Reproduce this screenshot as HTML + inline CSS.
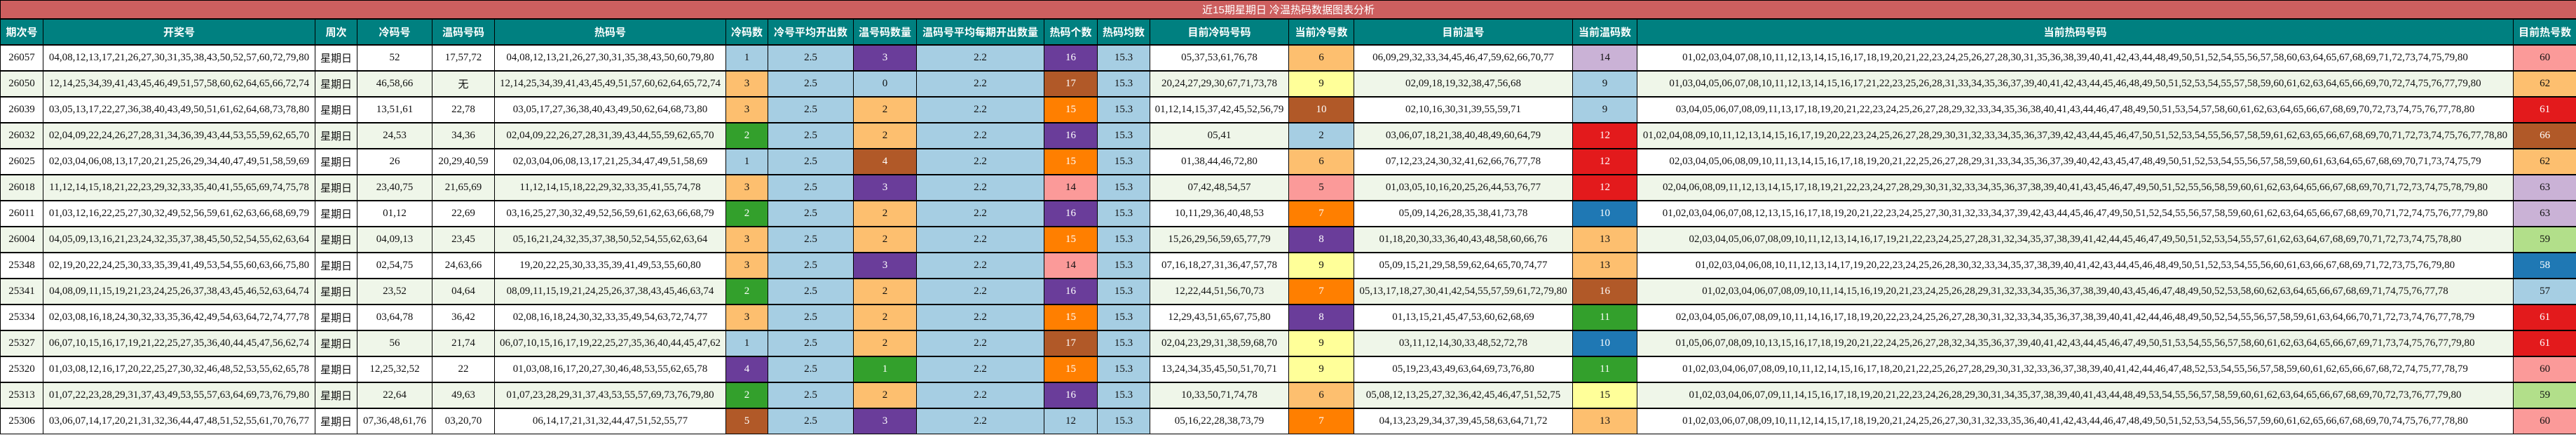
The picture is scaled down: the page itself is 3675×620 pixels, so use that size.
<!DOCTYPE html>
<html><head><meta charset="utf-8"><style>
html,body{margin:0;padding:0;background:#fff}
table{border-collapse:collapse;table-layout:fixed;width:3675px;font-family:"Liberation Serif","Noto Serif CJK SC",serif;font-size:15px;color:#111}
td,th{border:1px solid #000;text-align:center;padding:0;white-space:nowrap;overflow:hidden}
.t td{background:#CD5F5F;color:#fff;height:25px;font-family:"Liberation Sans","Noto Sans CJK SC",sans-serif;font-size:15px;border-bottom:2px solid #000}
th{background:#008080;color:#fff;height:35px;font-family:"Liberation Sans","Noto Sans CJK SC",sans-serif;font-size:15px;font-weight:bold}
tr.d td{height:35px;border-top:2px solid #000}
tr.a td{background:#EFF6E9}
td.lb{background:#A6CEE3!important}
td.lo{background:#FDBF6F!important}
td.p{background:#6A3D9A!important;color:#fff}
td.br{background:#B15928!important;color:#fff}
td.o{background:#FF7F00!important;color:#fff}
td.g{background:#33A02C!important;color:#fff}
td.pk{background:#FB9A99!important}
td.y{background:#FFFF99!important}
td.lv{background:#CAB2D6!important}
td.b{background:#1F78B4!important;color:#fff}
td.r{background:#E31A1C!important;color:#fff}
td.lg{background:#B2DF8A!important}
td.cn{font-family:"Liberation Sans","Noto Sans CJK SC",sans-serif}
</style></head><body>
<table>
<colgroup><col style="width:61px"><col style="width:388px"><col style="width:60px"><col style="width:107px"><col style="width:89px"><col style="width:330px"><col style="width:60px"><col style="width:122px"><col style="width:90px"><col style="width:182px"><col style="width:76px"><col style="width:75px"><col style="width:198px"><col style="width:93px"><col style="width:312px"><col style="width:92px"><col style="width:1250px"><col style="width:90px"></colgroup>
<tr class="t"><td colspan="18">近15期星期日 冷温热码数据图表分析</td></tr>
<tr><th>期次号</th><th>开奖号</th><th>周次</th><th>冷码号</th><th>温码号码</th><th>热码号</th><th>冷码数</th><th>冷号平均开出数</th><th>温号码数量</th><th>温码号平均每期开出数量</th><th>热码个数</th><th>热码均数</th><th>目前冷码号码</th><th>当前冷号数</th><th>目前温号</th><th>当前温码数</th><th>当前热码号码</th><th>目前热号数</th></tr>

<tr class="d"><td>26057</td><td>04,08,12,13,17,21,26,27,30,31,35,38,43,50,52,57,60,72,79,80</td><td class="cn">星期日</td><td>52</td><td>17,57,72</td><td>04,08,12,13,21,26,27,30,31,35,38,43,50,60,79,80</td><td class="lb">1</td><td class="lb">2.5</td><td class="p">3</td><td class="lb">2.2</td><td class="p">16</td><td class="lb">15.3</td><td>05,37,53,61,76,78</td><td class="lo">6</td><td>06,09,29,32,33,34,45,46,47,59,62,66,70,77</td><td class="lv">14</td><td>01,02,03,04,07,08,10,11,12,13,14,15,16,17,18,19,20,21,22,23,24,25,26,27,28,30,31,35,36,38,39,40,41,42,43,44,48,49,50,51,52,54,55,56,57,58,60,63,64,65,67,68,69,71,72,73,74,75,79,80</td><td class="pk">60</td></tr>

<tr class="d a"><td>26050</td><td>12,14,25,34,39,41,43,45,46,49,51,57,58,60,62,64,65,66,72,74</td><td class="cn">星期日</td><td>46,58,66</td><td class="cn">无</td><td>12,14,25,34,39,41,43,45,49,51,57,60,62,64,65,72,74</td><td class="lo">3</td><td class="lb">2.5</td><td class="lb">0</td><td class="lb">2.2</td><td class="br">17</td><td class="lb">15.3</td><td>20,24,27,29,30,67,71,73,78</td><td class="y">9</td><td>02,09,18,19,32,38,47,56,68</td><td class="lb">9</td><td>01,03,04,05,06,07,08,10,11,12,13,14,15,16,17,21,22,23,25,26,28,31,33,34,35,36,37,39,40,41,42,43,44,45,46,48,49,50,51,52,53,54,55,57,58,59,60,61,62,63,64,65,66,69,70,72,74,75,76,77,79,80</td><td class="lo">62</td></tr>

<tr class="d"><td>26039</td><td>03,05,13,17,22,27,36,38,40,43,49,50,51,61,62,64,68,73,78,80</td><td class="cn">星期日</td><td>13,51,61</td><td>22,78</td><td>03,05,17,27,36,38,40,43,49,50,62,64,68,73,80</td><td class="lo">3</td><td class="lb">2.5</td><td class="lo">2</td><td class="lb">2.2</td><td class="o">15</td><td class="lb">15.3</td><td>01,12,14,15,37,42,45,52,56,79</td><td class="br">10</td><td>02,10,16,30,31,39,55,59,71</td><td class="lb">9</td><td>03,04,05,06,07,08,09,11,13,17,18,19,20,21,22,23,24,25,26,27,28,29,32,33,34,35,36,38,40,41,43,44,46,47,48,49,50,51,53,54,57,58,60,61,62,63,64,65,66,67,68,69,70,72,73,74,75,76,77,78,80</td><td class="r">61</td></tr>

<tr class="d a"><td>26032</td><td>02,04,09,22,24,26,27,28,31,34,36,39,43,44,53,55,59,62,65,70</td><td class="cn">星期日</td><td>24,53</td><td>34,36</td><td>02,04,09,22,26,27,28,31,39,43,44,55,59,62,65,70</td><td class="g">2</td><td class="lb">2.5</td><td class="lo">2</td><td class="lb">2.2</td><td class="p">16</td><td class="lb">15.3</td><td>05,41</td><td class="lb">2</td><td>03,06,07,18,21,38,40,48,49,60,64,79</td><td class="r">12</td><td>01,02,04,08,09,10,11,12,13,14,15,16,17,19,20,22,23,24,25,26,27,28,29,30,31,32,33,34,35,36,37,39,42,43,44,45,46,47,50,51,52,53,54,55,56,57,58,59,61,62,63,65,66,67,68,69,70,71,72,73,74,75,76,77,78,80</td><td class="br">66</td></tr>

<tr class="d"><td>26025</td><td>02,03,04,06,08,13,17,20,21,25,26,29,34,40,47,49,51,58,59,69</td><td class="cn">星期日</td><td>26</td><td>20,29,40,59</td><td>02,03,04,06,08,13,17,21,25,34,47,49,51,58,69</td><td class="lb">1</td><td class="lb">2.5</td><td class="br">4</td><td class="lb">2.2</td><td class="o">15</td><td class="lb">15.3</td><td>01,38,44,46,72,80</td><td class="lo">6</td><td>07,12,23,24,30,32,41,62,66,76,77,78</td><td class="r">12</td><td>02,03,04,05,06,08,09,10,11,13,14,15,16,17,18,19,20,21,22,25,26,27,28,29,31,33,34,35,36,37,39,40,42,43,45,47,48,49,50,51,52,53,54,55,56,57,58,59,60,61,63,64,65,67,68,69,70,71,73,74,75,79</td><td class="lo">62</td></tr>

<tr class="d a"><td>26018</td><td>11,12,14,15,18,21,22,23,29,32,33,35,40,41,55,65,69,74,75,78</td><td class="cn">星期日</td><td>23,40,75</td><td>21,65,69</td><td>11,12,14,15,18,22,29,32,33,35,41,55,74,78</td><td class="lo">3</td><td class="lb">2.5</td><td class="p">3</td><td class="lb">2.2</td><td class="pk">14</td><td class="lb">15.3</td><td>07,42,48,54,57</td><td class="pk">5</td><td>01,03,05,10,16,20,25,26,44,53,76,77</td><td class="r">12</td><td>02,04,06,08,09,11,12,13,14,15,17,18,19,21,22,23,24,27,28,29,30,31,32,33,34,35,36,37,38,39,40,41,43,45,46,47,49,50,51,52,55,56,58,59,60,61,62,63,64,65,66,67,68,69,70,71,72,73,74,75,78,79,80</td><td class="lv">63</td></tr>

<tr class="d"><td>26011</td><td>01,03,12,16,22,25,27,30,32,49,52,56,59,61,62,63,66,68,69,79</td><td class="cn">星期日</td><td>01,12</td><td>22,69</td><td>03,16,25,27,30,32,49,52,56,59,61,62,63,66,68,79</td><td class="g">2</td><td class="lb">2.5</td><td class="lo">2</td><td class="lb">2.2</td><td class="p">16</td><td class="lb">15.3</td><td>10,11,29,36,40,48,53</td><td class="o">7</td><td>05,09,14,26,28,35,38,41,73,78</td><td class="b">10</td><td>01,02,03,04,06,07,08,12,13,15,16,17,18,19,20,21,22,23,24,25,27,30,31,32,33,34,37,39,42,43,44,45,46,47,49,50,51,52,54,55,56,57,58,59,60,61,62,63,64,65,66,67,68,69,70,71,72,74,75,76,77,79,80</td><td class="lv">63</td></tr>

<tr class="d a"><td>26004</td><td>04,05,09,13,16,21,23,24,32,35,37,38,45,50,52,54,55,62,63,64</td><td class="cn">星期日</td><td>04,09,13</td><td>23,45</td><td>05,16,21,24,32,35,37,38,50,52,54,55,62,63,64</td><td class="lo">3</td><td class="lb">2.5</td><td class="lo">2</td><td class="lb">2.2</td><td class="o">15</td><td class="lb">15.3</td><td>15,26,29,56,59,65,77,79</td><td class="p">8</td><td>01,18,20,30,33,36,40,43,48,58,60,66,76</td><td class="lo">13</td><td>02,03,04,05,06,07,08,09,10,11,12,13,14,16,17,19,21,22,23,24,25,27,28,31,32,34,35,37,38,39,41,42,44,45,46,47,49,50,51,52,53,54,55,57,61,62,63,64,67,68,69,70,71,72,73,74,75,78,80</td><td class="lg">59</td></tr>

<tr class="d"><td>25348</td><td>02,19,20,22,24,25,30,33,35,39,41,49,53,54,55,60,63,66,75,80</td><td class="cn">星期日</td><td>02,54,75</td><td>24,63,66</td><td>19,20,22,25,30,33,35,39,41,49,53,55,60,80</td><td class="lo">3</td><td class="lb">2.5</td><td class="p">3</td><td class="lb">2.2</td><td class="pk">14</td><td class="lb">15.3</td><td>07,16,18,27,31,36,47,57,78</td><td class="y">9</td><td>05,09,15,21,29,58,59,62,64,65,70,74,77</td><td class="lo">13</td><td>01,02,03,04,06,08,10,11,12,13,14,17,19,20,22,23,24,25,26,28,30,32,33,34,35,37,38,39,40,41,42,43,44,45,46,48,49,50,51,52,53,54,55,56,60,61,63,66,67,68,69,71,72,73,75,76,79,80</td><td class="b">58</td></tr>

<tr class="d a"><td>25341</td><td>04,08,09,11,15,19,21,23,24,25,26,37,38,43,45,46,52,63,64,74</td><td class="cn">星期日</td><td>23,52</td><td>04,64</td><td>08,09,11,15,19,21,24,25,26,37,38,43,45,46,63,74</td><td class="g">2</td><td class="lb">2.5</td><td class="lo">2</td><td class="lb">2.2</td><td class="p">16</td><td class="lb">15.3</td><td>12,22,44,51,56,70,73</td><td class="o">7</td><td>05,13,17,18,27,30,41,42,54,55,57,59,61,72,79,80</td><td class="br">16</td><td>01,02,03,04,06,07,08,09,10,11,14,15,16,19,20,21,23,24,25,26,28,29,31,32,33,34,35,36,37,38,39,40,43,45,46,47,48,49,50,52,53,58,60,62,63,64,65,66,67,68,69,71,74,75,76,77,78</td><td class="lb">57</td></tr>

<tr class="d"><td>25334</td><td>02,03,08,16,18,24,30,32,33,35,36,42,49,54,63,64,72,74,77,78</td><td class="cn">星期日</td><td>03,64,78</td><td>36,42</td><td>02,08,16,18,24,30,32,33,35,49,54,63,72,74,77</td><td class="lo">3</td><td class="lb">2.5</td><td class="lo">2</td><td class="lb">2.2</td><td class="o">15</td><td class="lb">15.3</td><td>12,29,43,51,65,67,75,80</td><td class="p">8</td><td>01,13,15,21,45,47,53,60,62,68,69</td><td class="g">11</td><td>02,03,04,05,06,07,08,09,10,11,14,16,17,18,19,20,22,23,24,25,26,27,28,30,31,32,33,34,35,36,37,38,39,40,41,42,44,46,48,49,50,52,54,55,56,57,58,59,61,63,64,66,70,71,72,73,74,76,77,78,79</td><td class="r">61</td></tr>

<tr class="d a"><td>25327</td><td>06,07,10,15,16,17,19,21,22,25,27,35,36,40,44,45,47,56,62,74</td><td class="cn">星期日</td><td>56</td><td>21,74</td><td>06,07,10,15,16,17,19,22,25,27,35,36,40,44,45,47,62</td><td class="lb">1</td><td class="lb">2.5</td><td class="lo">2</td><td class="lb">2.2</td><td class="br">17</td><td class="lb">15.3</td><td>02,04,23,29,31,38,59,68,70</td><td class="y">9</td><td>03,11,12,14,30,33,48,52,72,78</td><td class="b">10</td><td>01,05,06,07,08,09,10,13,15,16,17,18,19,20,21,22,24,25,26,27,28,32,34,35,36,37,39,40,41,42,43,44,45,46,47,49,50,51,53,54,55,56,57,58,60,61,62,63,64,65,66,67,69,71,73,74,75,76,77,79,80</td><td class="r">61</td></tr>

<tr class="d"><td>25320</td><td>01,03,08,12,16,17,20,22,25,27,30,32,46,48,52,53,55,62,65,78</td><td class="cn">星期日</td><td>12,25,32,52</td><td>22</td><td>01,03,08,16,17,20,27,30,46,48,53,55,62,65,78</td><td class="p">4</td><td class="lb">2.5</td><td class="g">1</td><td class="lb">2.2</td><td class="o">15</td><td class="lb">15.3</td><td>13,24,34,35,45,50,51,70,71</td><td class="y">9</td><td>05,19,23,43,49,63,64,69,73,76,80</td><td class="g">11</td><td>01,02,03,04,06,07,08,09,10,11,12,14,15,16,17,18,20,21,22,25,26,27,28,29,30,31,32,33,36,37,38,39,40,41,42,44,46,47,48,52,53,54,55,56,57,58,59,60,61,62,65,66,67,68,72,74,75,77,78,79</td><td class="pk">60</td></tr>

<tr class="d a"><td>25313</td><td>01,07,22,23,28,29,31,37,43,49,53,55,57,63,64,69,73,76,79,80</td><td class="cn">星期日</td><td>22,64</td><td>49,63</td><td>01,07,23,28,29,31,37,43,53,55,57,69,73,76,79,80</td><td class="g">2</td><td class="lb">2.5</td><td class="lo">2</td><td class="lb">2.2</td><td class="p">16</td><td class="lb">15.3</td><td>10,33,50,71,74,78</td><td class="lo">6</td><td>05,08,12,13,25,27,32,36,42,45,46,47,51,52,75</td><td class="y">15</td><td>01,02,03,04,06,07,09,11,14,15,16,17,18,19,20,21,22,23,24,26,28,29,30,31,34,35,37,38,39,40,41,43,44,48,49,53,54,55,56,57,58,59,60,61,62,63,64,65,66,67,68,69,70,72,73,76,77,79,80</td><td class="lg">59</td></tr>

<tr class="d"><td>25306</td><td>03,06,07,14,17,20,21,31,32,36,44,47,48,51,52,55,61,70,76,77</td><td class="cn">星期日</td><td>07,36,48,61,76</td><td>03,20,70</td><td>06,14,17,21,31,32,44,47,51,52,55,77</td><td class="br">5</td><td class="lb">2.5</td><td class="p">3</td><td class="lb">2.2</td><td class="lb">12</td><td class="lb">15.3</td><td>05,16,22,28,38,73,79</td><td class="o">7</td><td>04,13,23,29,34,37,39,45,58,63,64,71,72</td><td class="lo">13</td><td>01,02,03,06,07,08,09,10,11,12,14,15,17,18,19,20,21,24,25,26,27,30,31,32,33,35,36,40,41,42,43,44,46,47,48,49,50,51,52,53,54,55,56,57,59,60,61,62,65,66,67,68,69,70,74,75,76,77,78,80</td><td class="pk">60</td></tr>
</table>
</body></html>
